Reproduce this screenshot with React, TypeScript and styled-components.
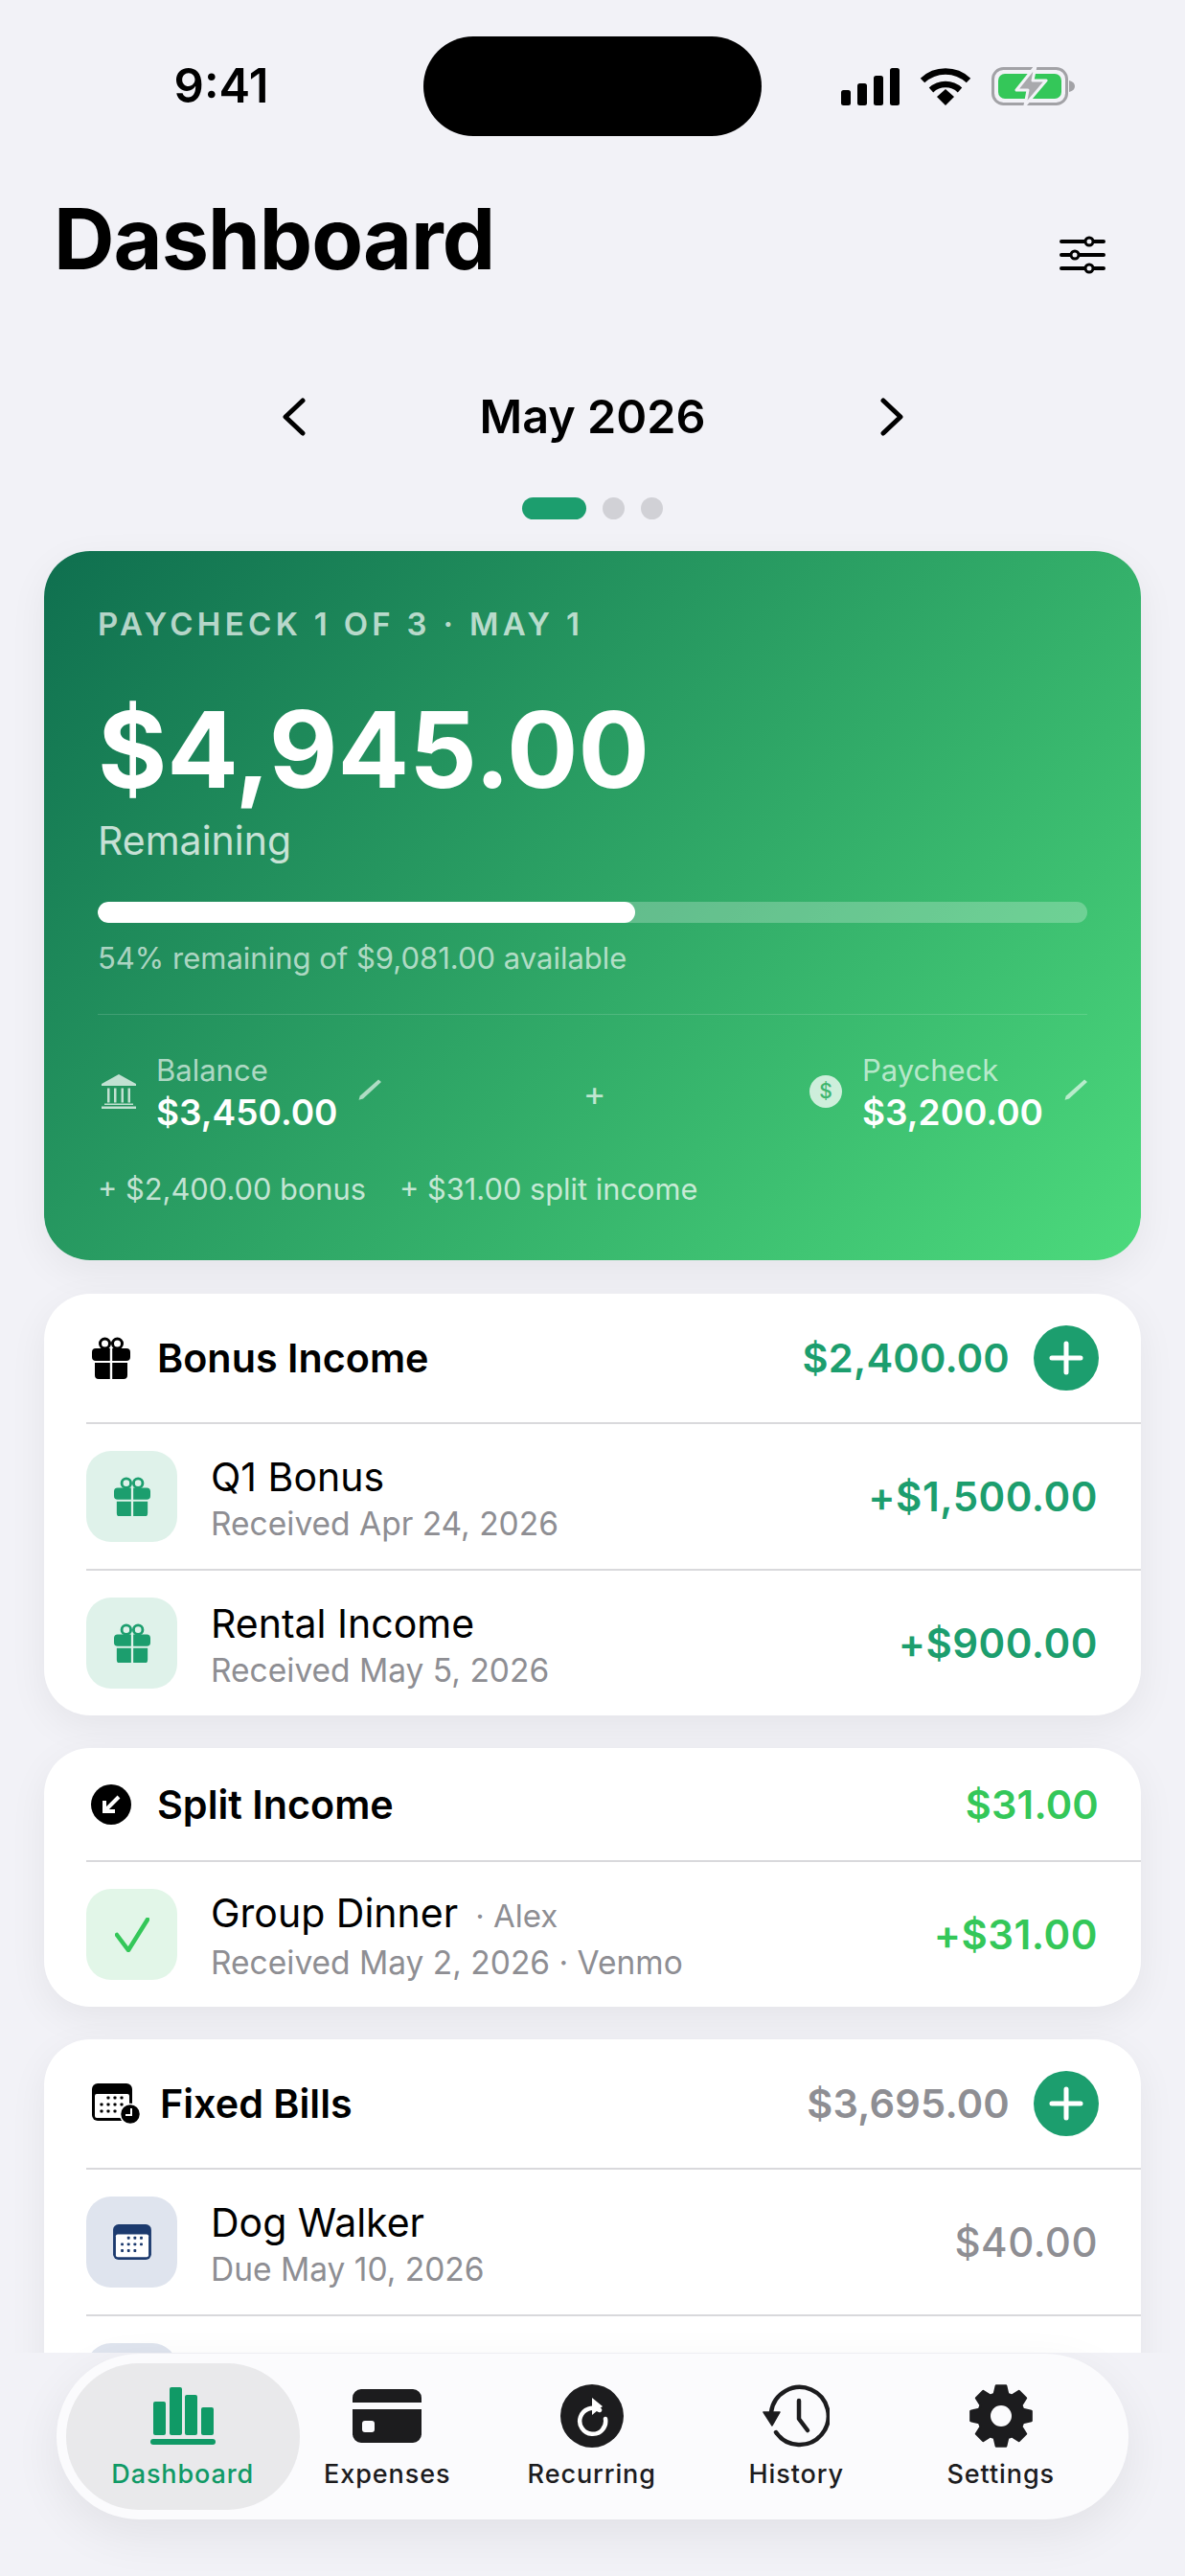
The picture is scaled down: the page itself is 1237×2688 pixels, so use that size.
import React, { FC, ReactNode } from 'react';

import styled, { createGlobalStyle } from 'styled-components';

const GREEN = '#1c9e6e';
const BRIGHT = '#34c759';
const GRAY = '#8e8e93';
const DARK = '#1c1c1e';

const GlobalStyle = createGlobalStyle`
  html, body {
    margin: 0;
    padding: 0;
    background: #f2f2f7;
  }
  * {
    box-sizing: border-box;
  }
`;

const Screen = styled.div`
  position: relative;
  width: 1237px;
  height: 2688px;
  overflow: hidden;
  background: #f2f2f7;
  color: #000;
  font-family: Inter, 'Liberation Sans', sans-serif;
`;

const StatusBar = styled.div`
  display: grid;
  grid-template-columns: 442px 353px 1fr;
  align-items: center;
  padding-top: 38px;
`;

const Clock = styled.div`
  padding-left: 20px;
  text-align: center;
  font-size: 49px;
  font-weight: 600;
  line-height: 104px;
`;

const Island = styled.div`
  height: 104px;
  border-radius: 52px;
  background: #000;
`;

const StatusIcons = styled.div`
  display: flex;
  align-items: center;
  gap: 21px;
  padding-left: 83px;
`;

const TitleRow = styled.div`
  display: flex;
  align-items: center;
  justify-content: space-between;
  height: 106px;
  margin-top: 54px;
  padding: 0 83px 0 56px;
`;

const Title = styled.h1`
  margin: 0;
  font-size: 88px;
  font-weight: 700;
  line-height: 106px;
  letter-spacing: -1px;
`;

const FilterButton = styled.div`
  margin-top: 34px;
  line-height: 0;
`;

const MonthRow = styled.div`
  display: flex;
  align-items: center;
  justify-content: center;
  gap: 0;
  height: 60px;
  margin-top: 103px;
`;

const MonthName = styled.div`
  width: 600px;
  text-align: center;
  font-size: 48.500px;
  font-weight: 600;
  line-height: 60px;
`;

const Dots = styled.div`
  display: flex;
  justify-content: center;
  gap: 17px;
  margin-top: 54px;
`;

const Dot = styled.div<{ $active?: boolean }>`
  width: ${props => (props.$active ? '67px' : '23px')};
  height: 23px;
  border-radius: 12px;
  background: ${props => (props.$active ? GREEN : '#d1d1d6')};
`;

const Hero = styled.section`
  height: 740px;
  margin: 33px 46px 35px;
  padding: 56px 56px 0;
  border-radius: 48px;
  background: linear-gradient(135deg, #0f6f4f 0%, #4cda7c 100%);
  box-shadow: 0 12px 40px rgba(0, 0, 0, 0.06);
  color: #fff;
`;

const HeroLabel = styled.div`
  font-size: 33px;
  font-weight: 600;
  line-height: 40px;
  letter-spacing: 4.300px;
  color: rgba(255, 255, 255, 0.7);
`;

const HeroAmount = styled.div`
  margin-top: 43px;
  font-size: 110.500px;
  font-weight: 700;
  line-height: 136px;
`;

const HeroCaption = styled.div`
  margin-top: 2px;
  font-size: 41px;
  line-height: 50px;
  color: rgba(255, 255, 255, 0.75);
`;

const Track = styled.div`
  height: 22px;
  margin-top: 39px;
  border-radius: 11px;
  overflow: hidden;
  background: rgba(255, 255, 255, 0.25);
`;

const Fill = styled.div`
  height: 100%;
  border-radius: 11px;
  background: #fff;
`;

const HeroNote = styled.div`
  margin-top: 18px;
  font-size: 31px;
  line-height: 38px;
  color: rgba(255, 255, 255, 0.65);
`;

const HeroDivider = styled.div`
  height: 1px;
  margin-top: 39px;
  background: rgba(255, 255, 255, 0.15);
`;

const FundsRow = styled.div`
  display: flex;
  align-items: center;
  justify-content: space-between;
  margin-top: 38px;
`;

const Fund = styled.div`
  display: flex;
  align-items: flex-start;
`;

const FundIcon = styled.div`
  display: flex;
  align-items: center;
  justify-content: flex-end;
  width: 40px;
  height: 84px;
  margin-right: 21px;
`;

const FundText = styled.div`
  display: flex;
  flex-direction: column;
`;

const FundLabel = styled.div`
  font-size: 31px;
  line-height: 40px;
  color: rgba(255, 255, 255, 0.65);
`;

const FundValue = styled.div`
  margin-top: 1px;
  font-size: 37px;
  font-weight: 600;
  line-height: 46px;
`;

const FundEdit = styled.div`
  margin: 29px 0 0 22px;
  line-height: 0;
`;

const PlusSign = styled.div`
  padding-left: 4px;
  font-size: 36px;
  line-height: 40px;
  color: rgba(255, 255, 255, 0.7);
`;

const DollarBadge = styled.div`
  width: 34px;
  height: 34px;
  border-radius: 50%;
  background: rgba(255, 255, 255, 0.75);
  color: #3fb56e;
  text-align: center;
  font-size: 21px;
  font-weight: 500;
  line-height: 34px;
`;

const Extras = styled.div`
  display: flex;
  gap: 35px;
  margin-top: 37px;
  font-size: 30.800px;
  line-height: 40px;
  color: rgba(255, 255, 255, 0.72);
`;

const Card = styled.section`
  margin: 34px 46px 0;
  border-radius: 48px;
  background: #fff;
  box-shadow: 0 12px 40px rgba(0, 0, 0, 0.06);

  ${Hero} + & {
    margin-top: 0;
  }
`;

const CardHeader = styled.div<{ $compact?: boolean }>`
  display: flex;
  align-items: center;
  height: ${props => (props.$compact ? '117px' : '134px')};
  padding: 0 44px 0 44px;
`;

const HeaderIcon = styled.div<{ $inset?: boolean }>`
  display: flex;
  align-items: center;
  justify-content: center;
  width: 52px;
  height: 52px;
  margin: ${props => (props.$inset ? '0 20px 0 5px' : '0 22px 0 0')};
`;

const HeaderTitle = styled.div`
  flex: 1;
  font-size: 41.300px;
  font-weight: 600;
  line-height: 50px;
`;

const HeaderAmount = styled.div<{ $color: string }>`
  font-size: 41.600px;
  font-weight: 600;
  line-height: 50px;
  letter-spacing: 0.2px;
  color: ${props => props.$color};
`;

const AddButton = styled.div`
  display: flex;
  align-items: center;
  justify-content: center;
  width: 68px;
  height: 68px;
  margin-left: 25px;
  border-radius: 50%;
  background: ${GREEN};
`;

const Row = styled.div`
  display: flex;
  align-items: center;
  height: 153px;
  margin-left: 44px;
  padding-right: 45px;
  border-top: 2px solid #d9d9dc;
`;

const Tile = styled.div<{ $bg: string }>`
  display: flex;
  align-items: center;
  justify-content: center;
  flex: none;
  width: 95px;
  height: 95px;
  margin-right: 35px;
  border-radius: 26px;
  background: ${props => props.$bg};
`;

const RowText = styled.div`
  flex: 1;
  padding-top: 4px;
`;

const RowName = styled.div`
  font-size: 41px;
  line-height: 50px;
`;

const RowPerson = styled.span`
  margin-left: 18px;
  font-size: 33px;
  color: ${GRAY};
`;

const RowSub = styled.div`
  margin-top: 2px;
  font-size: 33.500px;
  line-height: 44px;
  color: ${GRAY};
`;

const RowAmount = styled.div<{ $color: string; $light?: boolean }>`
  font-size: 42px;
  font-weight: ${props => (props.$light ? 500 : 600)};
  line-height: 50px;
  letter-spacing: 0.5px;
  color: ${props => props.$color};
`;

const TabDock = styled.nav`
  position: absolute;
  left: 0;
  right: 0;
  bottom: 0;
  height: 233px;
  padding: 1px 59px 0;
  background: #f2f2f7;
`;

const TabBar = styled.div`
  display: grid;
  grid-template-columns: repeat(5, 213.500px);
  height: 173px;
  padding: 10px 25px;
  border-radius: 87px;
  background: #fbfbfd;
  box-shadow: 0 16px 50px rgba(0, 0, 0, 0.07);
`;

const Tab = styled.div<{ $active?: boolean }>`
  display: flex;
  flex-direction: column;
  align-items: center;
  margin: ${props => (props.$active ? '0 -15px' : '0')};
  padding-top: 20px;
  border-radius: 76px;
  background: ${props => (props.$active ? '#e9e9eb' : 'transparent')};
  color: ${props => (props.$active ? '#109a66' : DARK)};
`;

const TabIcon = styled.div`
  display: flex;
  align-items: center;
  justify-content: center;
  height: 70px;
`;

const TabLabel = styled.div`
  margin-top: 9px;
  font-size: 27px;
  font-weight: 500;
  line-height: 34px;
  letter-spacing: 0.9px;
`;

const Gift: FC<{ size: number; color: string }> = ({ size, color }) => (
  <svg width={size} height={size * 1.1} viewBox="0 0 40 44" fill={color}>
    <circle cx="13.500" cy="7" r="5" fill="none" stroke={color} strokeWidth="3" />
    <circle cx="26.500" cy="7" r="5" fill="none" stroke={color} strokeWidth="3" />
    <path d="M0 16a4 4 0 0 1 4-4h14.800v13H4a4 4 0 0 1-4-4zM21.200 12H36a4 4 0 0 1 4 4v5a4 4 0 0 1-4 4H21.200z" />
    <path d="M3 27h15.800v17H7a4 4 0 0 1-4-4zM21.200 27H37v13a4 4 0 0 1-4 4H21.200z" />
  </svg>
);

const PlusIcon = () => (
  <svg width="36" height="36" viewBox="0 0 36 36" stroke="#fff" strokeWidth="5" strokeLinecap="round">
    <path d="M18 3v30M3 18h30" />
  </svg>
);

const Chevron: FC<{ left?: boolean }> = ({ left }) => (
  <svg width="24" height="40" viewBox="0 0 24 40" fill="none" stroke="#000" strokeWidth="5" strokeLinecap="round" strokeLinejoin="round">
    <path d={left ? 'M21 3L3 20l18 17' : 'M3 3l18 17L3 37'} />
  </svg>
);

const Pencil = () => (
  <svg width="24" height="22" viewBox="0 0 24 22" fill="rgba(255,255,255,0.62)">
    <path d="M21 0.500l3 2.500L5 20.500 0.500 21.800l1.300-4.300z" />
  </svg>
);

const SIGNAL = [
  { x: 0, h: 16 },
  { x: 17, h: 23 },
  { x: 34, h: 31 },
  { x: 51, h: 39 },
];

const StatusGlyphs = () => (
  <>
    <svg width="61" height="39" viewBox="0 0 61 39">
      {SIGNAL.map(bar => (
        <rect key={bar.x} x={bar.x} y={39 - bar.h} width="10" height={bar.h} rx="2.500" />
      ))}
    </svg>
    <svg width="54" height="40" viewBox="0 0 54 40" fill="none" stroke="#000" strokeWidth="6.500">
      <path d="M3 14a35 35 0 0 1 48 0" />
      <path d="M12 24a22 22 0 0 1 30 0" />
      <path d="M18 31l9-8 9 8-9 9z" fill="#000" stroke="none" />
    </svg>
    <svg width="88" height="42" viewBox="0 0 88 42">
      <rect x="1.500" y="2.500" width="77" height="37" rx="11" fill="none" stroke="#a2a2a6" strokeWidth="3" />
      <path d="M81 15c4 1 6 3 6 6s-2 5-6 6z" fill="#a2a2a6" />
      <rect x="7" y="8" width="66" height="26" rx="7" fill={BRIGHT} />
      <path d="M46 0L26 25h12l-3 16 22-26H43z" fill="#a9a9ad" stroke="#f2f2f7" strokeWidth="3" strokeLinejoin="round" />
    </svg>
  </>
);

const Sliders = () => (
  <svg width="48" height="42" viewBox="0 0 48 42" stroke="#000" strokeWidth="4" strokeLinecap="round" fill="#f2f2f7">
    <path d="M2 7h44M2 21h44M2 35h44" />
    <circle cx="31" cy="7" r="4" strokeWidth="3" />
    <circle cx="16" cy="21" r="4" strokeWidth="3" />
    <circle cx="31" cy="35" r="4" strokeWidth="3" />
  </svg>
);

const Bank = () => (
  <svg width="36" height="36" viewBox="0 0 36 36" fill="rgba(255,255,255,0.72)">
    <path d="M18 0L36 10v2H0v-2z" />
    <path d="M6 14.500h2.500v15H6zM13 14.500h2.500v15H13zM20.500 14.500H23v15h-2.500zM27.500 14.500H30v15h-2.500z" />
    <path d="M3 30.500h30V32H3zM0 33.500h36V36H0z" />
  </svg>
);

const DownArrow = () => (
  <svg width="42" height="42" viewBox="0 0 42 42">
    <circle cx="21" cy="21" r="21" />
    <path d="M29 13L14 28M14 17v11h11" fill="none" stroke="#fff" strokeWidth="4" />
  </svg>
);

const CALENDAR_DOTS = [
  [17, 15],
  [24, 15],
  [31, 15],
  [10, 22],
  [17, 22],
  [24, 22],
  [31, 22],
  [10, 29],
  [17, 29],
  [24, 29],
];

const Calendar: FC<{ color: string; clock?: boolean }> = ({ color, clock }) => (
  <svg width={clock ? 51 : 40} height={clock ? 43 : 37} viewBox={clock ? '0 0 51 43' : '0 0 42 39'}>
    <rect x="0" y="0" width="42" height="39" rx="6" fill={color} />
    <rect x="3" y="11" width="36" height="25" rx="2" fill="#fff" />
    {CALENDAR_DOTS.map(([x, y]) => (
      <rect key={`${x}-${y}`} x={x - 1.5} y={y - 1.5} width="3" height="3" rx="0.800" fill={color} />
    ))}
    {clock && (
      <>
        <circle cx="40" cy="32" r="10.500" fill="#000" stroke="#fff" strokeWidth="1.500" />
        <path d="M41 26v7h-6" fill="none" stroke="#fff" strokeWidth="2" />
      </>
    )}
  </svg>
);

const Check = () => (
  <svg width="36" height="36" viewBox="0 0 36 36" fill="none" stroke={BRIGHT} strokeWidth="4.500" strokeLinecap="round" strokeLinejoin="round">
    <path d="M2 18l12 16L34 2" />
  </svg>
);

const BarsIcon = () => (
  <svg width="68" height="60" viewBox="0 0 68 60" fill="#109a66">
    <rect x="3" y="15" width="13" height="35" rx="2" />
    <rect x="20" y="0" width="13" height="50" rx="2" />
    <rect x="36" y="8" width="13" height="42" rx="2" />
    <rect x="53" y="21" width="13" height="29" rx="2" />
    <rect x="0" y="54" width="68" height="6" rx="3" />
  </svg>
);

const CardIcon = () => (
  <svg width="72" height="56" viewBox="0 0 72 56" fill={DARK}>
    <path d="M0 14V9a9 9 0 0 1 9-9h54a9 9 0 0 1 9 9v5zM0 21h72v26a9 9 0 0 1-9 9H9a9 9 0 0 1-9-9z" />
    <rect x="10" y="33" width="13" height="12" rx="3" fill="#fbfbfd" />
  </svg>
);

const RepeatIcon = () => (
  <svg width="66" height="66" viewBox="0 0 66 66">
    <circle cx="33" cy="33" r="33" fill={DARK} />
    <path d="M41 27a13.500 13.500 0 1 0 6 9" fill="none" stroke="#fff" strokeWidth="4.500" strokeLinecap="round" />
    <path d="M33 14l11 9-11 9z" fill="#fff" />
  </svg>
);

const HistoryIcon = () => (
  <svg width="70" height="66" viewBox="0 0 70 66" fill="none" stroke={DARK} strokeWidth="4.500" strokeLinecap="round" strokeLinejoin="round">
    <path d="M9 29a30 30 0 1 1 5 21" />
    <path d="M38 17v19l9 12" />
    <path d="M1 29h17l-8 14z" fill={DARK} strokeWidth="1.500" />
  </svg>
);

// gear outline worked out from the tooth count, easier than a hand written path
const gearPath = (): string => {
  const teeth = 8;
  const points: string[] = [];
  for (let i = 0; i < teeth; i += 1) {
    const mid = (i * Math.PI * 2) / teeth - Math.PI / 2;
    [
      [-0.3, 24],
      [-0.16, 32],
      [0.16, 32],
      [0.3, 24],
    ].forEach(([offset, radius]) => {
      const x = 33 + radius * Math.cos(mid + offset);
      const y = 33 + radius * Math.sin(mid + offset);
      points.push(`${x.toFixed(2)} ${y.toFixed(2)}`);
    });
  }
  return `M${points.join('L')}Z`;
};

const GearIcon = () => (
  <svg width="66" height="68" viewBox="0 0 66 66">
    <path d={gearPath()} fill={DARK} stroke={DARK} strokeWidth="2.500" strokeLinejoin="round" />
    <circle cx="33" cy="33" r="11" fill="#fbfbfd" />
  </svg>
);

type RowData = {
  name: string;
  person?: string;
  sub: string;
  amount: string;
  amountColor: string;
  tile: string;
  icon: ReactNode;
  light?: boolean;
};

const bonusRows: RowData[] = [
  {
    name: 'Q1 Bonus',
    sub: 'Received Apr 24, 2026',
    amount: '+$1,500.00',
    amountColor: GREEN,
    tile: '#dff2ea',
    icon: <Gift size={38} color={GREEN} />,
  },
  {
    name: 'Rental Income',
    sub: 'Received May 5, 2026',
    amount: '+$900.00',
    amountColor: GREEN,
    tile: '#dff2ea',
    icon: <Gift size={38} color={GREEN} />,
  },
];

const splitRows: RowData[] = [
  {
    name: 'Group Dinner',
    person: '· Alex',
    sub: 'Received May 2, 2026 · Venmo',
    amount: '+$31.00',
    amountColor: BRIGHT,
    tile: '#e2f6e8',
    icon: <Check />,
  },
];

const billRows: RowData[] = [
  {
    name: 'Dog Walker',
    sub: 'Due May 10, 2026',
    amount: '$40.00',
    amountColor: GRAY,
    tile: '#dfe4ee',
    icon: <Calendar color="#1c3a6e" />,
    light: true,
  },
  {
    name: 'Internet',
    sub: 'Due May 12, 2026',
    amount: '$80.00',
    amountColor: GRAY,
    tile: '#dfe4ee',
    icon: <Calendar color="#1c3a6e" />,
    light: true,
  },
];

const tabs = [
  { label: 'Dashboard', icon: <BarsIcon />, active: true },
  { label: 'Expenses', icon: <CardIcon /> },
  { label: 'Recurring', icon: <RepeatIcon /> },
  { label: 'History', icon: <HistoryIcon /> },
  { label: 'Settings', icon: <GearIcon /> },
];

const Rows: FC<{ rows: RowData[] }> = ({ rows }) => (
  <>
    {rows.map(row => (
      <Row key={row.name}>
        <Tile $bg={row.tile}>{row.icon}</Tile>
        <RowText>
          <RowName>
            {row.name}
            {row.person && <RowPerson>{row.person}</RowPerson>}
          </RowName>
          <RowSub>{row.sub}</RowSub>
        </RowText>
        <RowAmount $color={row.amountColor} $light={row.light}>
          {row.amount}
        </RowAmount>
      </Row>
    ))}
  </>
);

const App: FC = () => (
  <Screen>
    <GlobalStyle />
    <StatusBar>
      <Clock>9:41</Clock>
      <Island />
      <StatusIcons>
        <StatusGlyphs />
      </StatusIcons>
    </StatusBar>

    <TitleRow>
      <Title>Dashboard</Title>
      <FilterButton>
        <Sliders />
      </FilterButton>
    </TitleRow>

    <MonthRow>
      <Chevron left />
      <MonthName>May 2026</MonthName>
      <Chevron />
    </MonthRow>

    <Dots>
      <Dot $active />
      <Dot />
      <Dot />
    </Dots>

    <Hero>
      <HeroLabel>PAYCHECK 1 OF 3 · MAY 1</HeroLabel>
      <HeroAmount>$4,945.00</HeroAmount>
      <HeroCaption>Remaining</HeroCaption>
      <Track>
        <Fill style={{ width: '54.3%' }} />
      </Track>
      <HeroNote>54% remaining of $9,081.00 available</HeroNote>
      <HeroDivider />
      <FundsRow>
        <Fund>
          <FundIcon>
            <Bank />
          </FundIcon>
          <FundText>
            <FundLabel>Balance</FundLabel>
            <FundValue>$3,450.00</FundValue>
          </FundText>
          <FundEdit>
            <Pencil />
          </FundEdit>
        </Fund>
        <PlusSign>+</PlusSign>
        <Fund>
          <FundIcon>
            <DollarBadge>$</DollarBadge>
          </FundIcon>
          <FundText>
            <FundLabel>Paycheck</FundLabel>
            <FundValue>$3,200.00</FundValue>
          </FundText>
          <FundEdit>
            <Pencil />
          </FundEdit>
        </Fund>
      </FundsRow>
      <Extras>
        <span>+ $2,400.00 bonus</span>
        <span>+ $31.00 split income</span>
      </Extras>
    </Hero>

    <Card>
      <CardHeader>
        <HeaderIcon>
          <Gift size={40} color="#000" />
        </HeaderIcon>
        <HeaderTitle>Bonus Income</HeaderTitle>
        <HeaderAmount $color={GREEN}>$2,400.00</HeaderAmount>
        <AddButton>
          <PlusIcon />
        </AddButton>
      </CardHeader>
      <Rows rows={bonusRows} />
    </Card>

    <Card>
      <CardHeader $compact>
        <HeaderIcon>
          <DownArrow />
        </HeaderIcon>
        <HeaderTitle>Split Income</HeaderTitle>
        <HeaderAmount $color={BRIGHT}>$31.00</HeaderAmount>
      </CardHeader>
      <Rows rows={splitRows} />
    </Card>

    <Card>
      <CardHeader>
        <HeaderIcon $inset>
          <Calendar color="#000" clock />
        </HeaderIcon>
        <HeaderTitle>Fixed Bills</HeaderTitle>
        <HeaderAmount $color={GRAY}>$3,695.00</HeaderAmount>
        <AddButton>
          <PlusIcon />
        </AddButton>
      </CardHeader>
      <Rows rows={billRows} />
    </Card>

    <TabDock>
      <TabBar>
        {tabs.map(tab => (
          <Tab key={tab.label} $active={tab.active}>
            <TabIcon>{tab.icon}</TabIcon>
            <TabLabel>{tab.label}</TabLabel>
          </Tab>
        ))}
      </TabBar>
    </TabDock>
  </Screen>
);

export default App;
